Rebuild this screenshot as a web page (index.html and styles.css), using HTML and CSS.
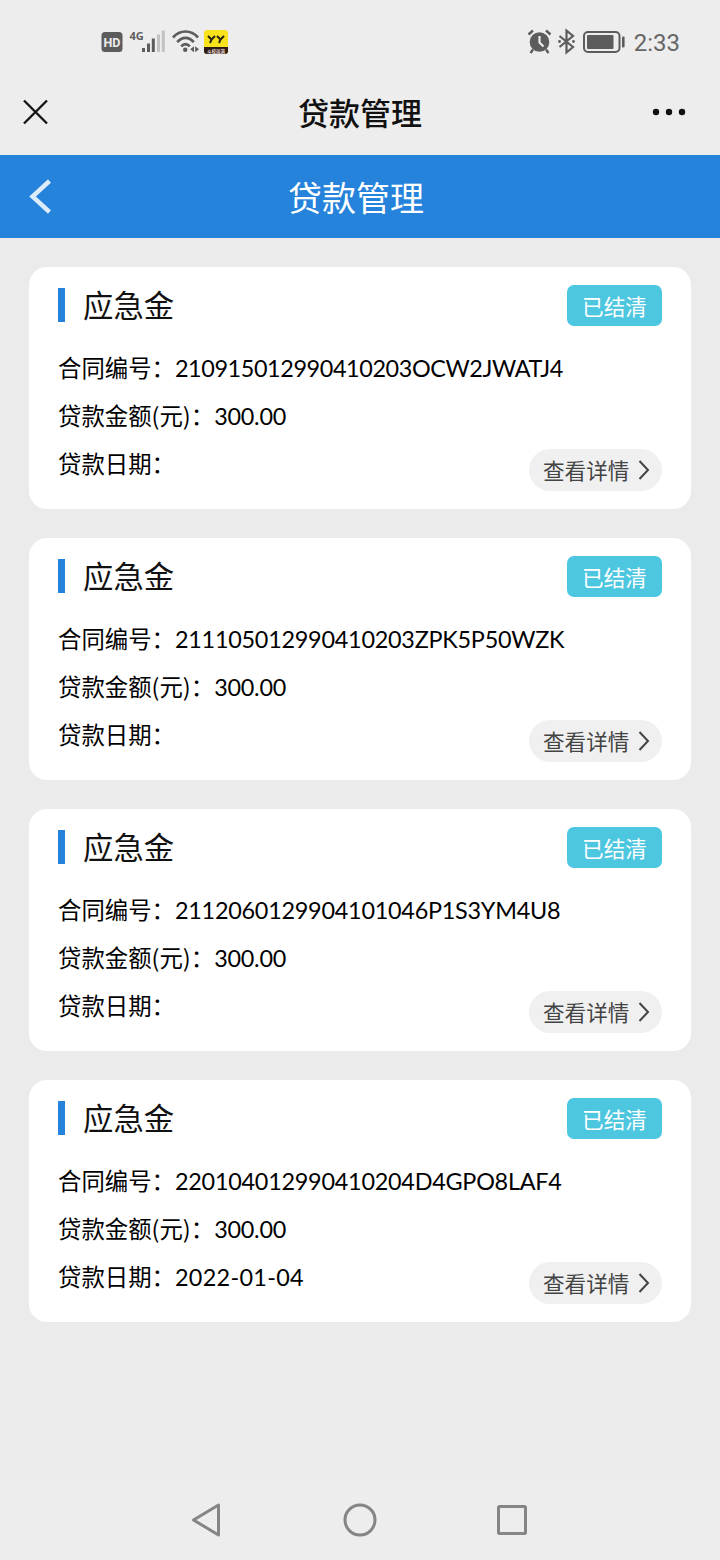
FILE: index.html
```html
<!DOCTYPE html>
<html lang="zh-CN">
<head>
    <meta charset="UTF-8">
    <meta name="viewport" content="width=device-width, initial-scale=1.0">
    <title>贷款管理</title>
    <link rel="stylesheet" href="styles.css">
</head>
<body>
    <div class="status-bar">
        <svg class="status-left" width="130" height="28" viewBox="100 28 130 28">
            <rect x="101.500" y="32" width="21" height="20" rx="3.500" fill="#5c5c5c"/>
            <text x="112" y="47" class="icon-hd">HD</text>
            <text x="129.500" y="40" class="icon-4g">4G</text>
            <rect x="142" y="48" width="3" height="4" fill="#5c5c5c"/>
            <rect x="147" y="43.500" width="3" height="8.500" fill="#5c5c5c"/>
            <rect x="151.800" y="38.500" width="3" height="13.500" fill="#5c5c5c"/>
            <rect x="157" y="34.500" width="3" height="17.500" fill="#c2c2c2"/>
            <rect x="161.800" y="30.500" width="3" height="21.500" fill="#c2c2c2"/>
            <g fill="none" stroke="#5c5c5c" stroke-width="2.700">
                <path d="M173 37.500C180 29.500 191 29.500 198 37.500"/>
                <path d="M177.200 42.200C182 36.500 189 36.500 193.800 42.200"/>
                <path d="M181.200 46.300C184 43.300 187 43.300 189.800 46.300"/>
            </g>
            <circle cx="185.200" cy="49.800" r="2.200" fill="#5c5c5c"/>
            <path d="M194 46.200v6l-3.800-3zM195.200 46.200v6l3.800-3z" fill="#5c5c5c"/>
            <rect x="204" y="30" width="24" height="24" rx="3" fill="#f8e21c"/>
            <path d="M204 47h24v4a3 3 0 0 1-3 3h-18a3 3 0 0 1-3-3z" fill="#2b1a16"/>
            <path d="M208 36l3.500 3.500 3.500-3.500M211.500 39.500l-1.500 3.500M217 36l3.500 3.500 3.500-3.500M220.500 39.500l-1.500 3.500" fill="none" stroke="#2b2410" stroke-width="2"/>
            <text x="216" y="52.500" class="icon-app">斗校运满</text>
        </svg>
        <div class="status-right">
            <svg width="100" height="28" viewBox="526 28 100 28">
                <circle cx="539.500" cy="42" r="9.800" fill="#5c5c5c"/>
                <path d="M539.500 36v6.500l4 4" fill="none" stroke="#ececec" stroke-width="2.200"/>
                <path d="M528.500 34.500l4.500-4M550.500 34.500l-4.500-4M533 49.500l-2.500 3.500M546 49.500l2.500 3.500" stroke="#5c5c5c" stroke-width="2.400"/>
                <path d="M559.500 36l13.500 11-6.500 5.500V30.500l6.500 5.500-13.500 11" fill="none" stroke="#5c5c5c" stroke-width="2.200"/>
                <circle cx="559.500" cy="41.500" r="1.400" fill="#5c5c5c"/>
                <circle cx="573.500" cy="41.500" r="1.400" fill="#5c5c5c"/>
                <rect x="584" y="32" width="35.500" height="20" rx="4" fill="none" stroke="#5c5c5c" stroke-width="2"/>
                <rect x="587" y="35" width="26.500" height="14" rx="1" fill="#5c5c5c"/>
                <rect x="622" y="36.500" width="2.600" height="11" rx="1" fill="#5c5c5c"/>
            </svg>
            <span class="time">2:33</span>
        </div>
    </div>

    <div class="title-bar">
        <svg width="34" height="26" viewBox="0 0 34 26">
            <path d="M1 1.500l23 23M24 1.500l-23 23" stroke="#161616" stroke-width="2.400"/>
        </svg>
        <h1>贷款管理</h1>
        <svg width="34" height="8" viewBox="0 0 34 8" fill="#111">
            <circle cx="4" cy="4" r="3.200"/>
            <circle cx="17" cy="4" r="3.200"/>
            <circle cx="30" cy="4" r="3.200"/>
        </svg>
    </div>

    <div class="nav">
        <svg width="24" height="38" viewBox="0 0 24 38">
            <path d="M21.500 3L4.500 18.500l17 15.500" fill="none" stroke="#dcecfb" stroke-width="4.400"/>
        </svg>
        <h2>贷款管理</h2>
    </div>

    <div class="loan-list">
        <div class="loan">
            <div class="loan-head">
                <h3>应急金</h3>
                <span class="badge">已结清</span>
            </div>
            <div class="loan-body">
                <div class="loan-info">
                    <p>合同编号：<span class="tight">210915012990410203OCW2JWATJ4</span></p>
                    <p>贷款金额(元)：<span>300.00</span></p>
                    <p>贷款日期：</p>
                </div>
                <a class="detail">查看详情<svg width="12" height="20" viewBox="0 0 12 20"><path d="M1.500 1l8.500 9-8.500 9"/></svg></a>
            </div>
        </div>
        <div class="loan">
            <div class="loan-head">
                <h3>应急金</h3>
                <span class="badge">已结清</span>
            </div>
            <div class="loan-body">
                <div class="loan-info">
                    <p>合同编号：<span>211105012990410203ZPK5P50WZK</span></p>
                    <p>贷款金额(元)：<span>300.00</span></p>
                    <p>贷款日期：</p>
                </div>
                <a class="detail">查看详情<svg width="12" height="20" viewBox="0 0 12 20"><path d="M1.500 1l8.500 9-8.500 9"/></svg></a>
            </div>
        </div>
        <div class="loan">
            <div class="loan-head">
                <h3>应急金</h3>
                <span class="badge">已结清</span>
            </div>
            <div class="loan-body">
                <div class="loan-info">
                    <p>合同编号：<span>2112060129904101046P1S3YM4U8</span></p>
                    <p>贷款金额(元)：<span>300.00</span></p>
                    <p>贷款日期：</p>
                </div>
                <a class="detail">查看详情<svg width="12" height="20" viewBox="0 0 12 20"><path d="M1.500 1l8.500 9-8.500 9"/></svg></a>
            </div>
        </div>
        <div class="loan">
            <div class="loan-head">
                <h3>应急金</h3>
                <span class="badge">已结清</span>
            </div>
            <div class="loan-body">
                <div class="loan-info">
                    <p>合同编号：<span>220104012990410204D4GPO8LAF4</span></p>
                    <p>贷款金额(元)：<span>300.00</span></p>
                    <p>贷款日期：<span class="date">2022-01-04</span></p>
                </div>
                <a class="detail">查看详情<svg width="12" height="20" viewBox="0 0 12 20"><path d="M1.500 1l8.500 9-8.500 9"/></svg></a>
            </div>
        </div>
    </div>

    <div class="system-nav">
        <svg width="36" height="36" viewBox="0 0 36 36"><path d="M28.500 3v30L3.500 18z"/></svg>
        <svg width="36" height="36" viewBox="0 0 36 36"><circle cx="18" cy="18" r="15"/></svg>
        <svg width="36" height="36" viewBox="0 0 36 36"><rect x="4.500" y="4.500" width="27" height="27" rx="1"/></svg>
    </div>
</body>
</html>
```

FILE: styles.css
```css
/* CSS styles */
* {
    box-sizing: border-box;
}

body {
    font-family: "Noto Sans CJK SC", sans-serif;
    margin: 0;
    height: 1560px;
    background-color: #ebebeb;
    color: #111;
    display: flex;
    flex-direction: column;
    overflow: hidden;
}

h1, h2, h3, p {
    margin: 0;
    font-weight: 400;
}

svg {
    display: block;
    flex: none;
}

/* phone status bar */
.status-bar {
    height: 70px;
    padding: 14px 40px 0 100px;
    display: flex;
    align-items: center;
    justify-content: space-between;
    background-color: #ededed;
}

.status-right {
    display: flex;
    align-items: center;
    gap: 8px;
}

.icon-hd {
    font: 700 12.5px Roboto, sans-serif;
    fill: #ededed;
    text-anchor: middle;
}

.icon-4g {
    font: 700 11px "Open Sans", sans-serif;
    fill: #5c5c5c;
}

.icon-app {
    font: 700 4.5px "Noto Sans CJK SC", sans-serif;
    fill: #e6d8cf;
    text-anchor: middle;
}

.time {
    padding-top: 2px;
    font-family: Roboto, sans-serif;
    font-size: 24px;
    line-height: 28px;
    color: #666;
}

.title-bar {
    height: 85px;
    padding: 0 34px 2px 23px;
    display: grid;
    grid-template-columns: 34px 1fr 34px;
    align-items: center;
    background-color: #ededed;
}

.title-bar h1 {
    padding-left: 11px;
    font-size: 31px;
    font-weight: 500;
    line-height: 40px;
    text-align: center;
}

.nav {
    height: 83px;
    padding: 0 32px 0 28px;
    display: grid;
    grid-template-columns: 24px 1fr 28px;
    align-items: center;
    background-color: #2683db;
    color: #fff;
}

.nav h2 {
    font-size: 34px;
    line-height: 48px;
    text-align: center;
}

/* loan cards */
.loan-list {
    flex: 1;
    padding: 29px;
    display: flex;
    flex-direction: column;
    gap: 29px;
}

.loan {
    height: 242px;
    padding: 18px 29px;
    border-radius: 18px;
    background-color: #fff;
}

.loan-head {
    height: 41px;
    display: flex;
    align-items: center;
    justify-content: space-between;
}

.loan-head h3 {
    height: 34px;
    margin-bottom: 2px;
    padding-left: 18px;
    border-left: 7px solid #2683db;
    font-size: 30.4px;
    line-height: 32px;
}

.badge {
    width: 95px;
    height: 41px;
    border-radius: 7px;
    background-color: #4dc6e0;
    color: #fff;
    font-size: 21.6px;
    line-height: 41px;
    text-align: center;
}

.loan-body {
    height: 147px;
    margin-top: 18px;
    display: flex;
}

.loan-info {
    flex: 1;
    min-width: 0;
    white-space: nowrap;
}

.loan-info p {
    height: 48px;
    font-size: 23.4px;
    line-height: 46px;
    color: #000;
}

.loan-info span {
    font-family: Lato, sans-serif;
    line-height: 1;
    letter-spacing: -0.25px;
}

.loan-info .tight {
    letter-spacing: -0.4px;
}

.loan-info .date {
    letter-spacing: 0.3px;
}

.detail {
    flex: none;
    width: 133px;
    height: 42px;
    padding: 0 12px 0 14px;
    display: flex;
    align-items: center;
    align-self: flex-end;
    justify-content: space-between;
    border-radius: 21px;
    background-color: #f0f0f0;
    color: #444;
    font-size: 21.6px;
    line-height: 44px;
    white-space: nowrap;
}

.detail path {
    fill: none;
    stroke: #444;
    stroke-width: 2;
}

/* android navigation */
.system-nav {
    height: 80px;
    display: flex;
    align-items: center;
    justify-content: center;
    gap: 116px;
    background-color: #ededed;
}

.system-nav svg {
    fill: none;
    stroke: #858585;
    stroke-width: 3;
    stroke-linejoin: round;
}
```
